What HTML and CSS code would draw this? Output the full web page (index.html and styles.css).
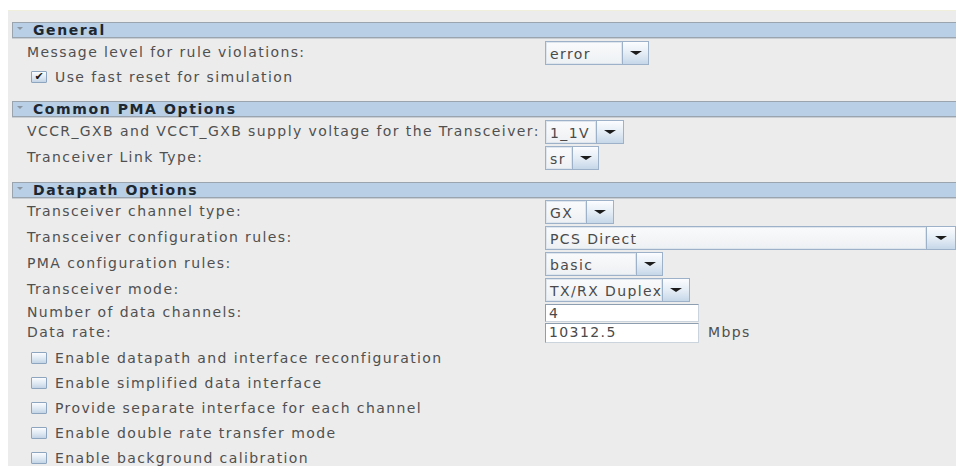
FILE: index.html
```html
<!DOCTYPE html>
<html lang="en">
<head>
<meta charset="utf-8">
<title>Transceiver Parameters</title>
<link rel="stylesheet" href="styles.css">
</head>
<body>
<div class="panel">

  <section class="group">
    <div class="group-head"><span class="twisty"></span>General</div>
    <div class="group-body body-general">
      <div class="row first">
        <span class="label">Message level for rule violations:</span>
        <span class="combo w-error"><span class="combo-value">error</span><span class="combo-btn"></span></span>
      </div>
      <div class="check-row tight">
        <span class="box checked">&#10004;</span><span>Use fast reset for simulation</span>
      </div>
    </div>
  </section>

  <section class="group">
    <div class="group-head"><span class="twisty"></span>Common PMA Options</div>
    <div class="group-body">
      <div class="row first">
        <span class="label">VCCR_GXB and VCCT_GXB supply voltage for the Transceiver:</span>
        <span class="combo w-volt"><span class="combo-value">1_1V</span><span class="combo-btn"></span></span>
      </div>
      <div class="row">
        <span class="label">Tranceiver Link Type:</span>
        <span class="combo w-sr"><span class="combo-value">sr</span><span class="combo-btn"></span></span>
      </div>
    </div>
  </section>

  <section class="group">
    <div class="group-head"><span class="twisty"></span>Datapath Options</div>
    <div class="group-body">
      <div class="row">
        <span class="label">Transceiver channel type:</span>
        <span class="combo w-gx"><span class="combo-value">GX</span><span class="combo-btn"></span></span>
      </div>
      <div class="row">
        <span class="label">Transceiver configuration rules:</span>
        <span class="combo w-fill"><span class="combo-value">PCS Direct</span><span class="combo-btn wide"></span></span>
      </div>
      <div class="row">
        <span class="label">PMA configuration rules:</span>
        <span class="combo w-basic"><span class="combo-value">basic</span><span class="combo-btn"></span></span>
      </div>
      <div class="row">
        <span class="label">Transceiver mode:</span>
        <span class="combo w-mode"><span class="combo-value">TX/RX Duplex</span><span class="combo-btn"></span></span>
      </div>
      <div class="row field-row">
        <span class="label">Number of data channels:</span>
        <span class="field">4</span>
      </div>
      <div class="row field-row rate">
        <span class="label">Data rate:</span>
        <span class="field">10312.5</span>
        <span class="unit">Mbps</span>
      </div>
      <div class="checks">
        <div class="check-row"><span class="box"></span><span>Enable datapath and interface reconfiguration</span></div>
        <div class="check-row"><span class="box"></span><span>Enable simplified data interface</span></div>
        <div class="check-row"><span class="box"></span><span>Provide separate interface for each channel</span></div>
        <div class="check-row"><span class="box"></span><span>Enable double rate transfer mode</span></div>
        <div class="check-row"><span class="box"></span><span>Enable background calibration</span></div>
      </div>
    </div>
  </section>

</div>
</body>
</html>
```
FILE: styles.css
```css
* {
  box-sizing: border-box;
}

html,
body {
  margin: 0;
  background: #ffffff;
}

body {
  font-family: "DejaVu Sans", "Liberation Sans", sans-serif;
  font-size: 14px;
  letter-spacing: 1.4px;
  color: #505050;
  overflow: hidden;
}

/* property sheet surface */
.panel {
  margin: 10px 0 0 8px;
  height: 456px;
  background: #ececec;
  border-top: 1px solid #efefdc;
  padding: 11px 0 0 4px;
  overflow: hidden;
}

/* collapsible section title bar */
.group-head {
  display: flex;
  align-items: center;
  height: 16px;
  background: #b8cfe5;
  border: 1px solid #9aa4ae;
  border-right: none;
  box-shadow: 0 1px 0 #c9ced4;
  font-weight: bold;
  font-size: 14px;
  line-height: 14px;
  letter-spacing: 1.6px;
  color: #1d2731;
}

.twisty {
  flex: none;
  width: 20px;
  height: 14px;
  position: relative;
}

.twisty::before {
  content: "";
  position: absolute;
  left: 4px;
  top: 4px;
  border-left: 3px solid transparent;
  border-right: 3px solid transparent;
  border-top: 3px solid #8a95a1;
}

.group-body {
  padding: 0 0 12px 15px;
}

.row {
  display: flex;
  align-items: center;
  height: 24px;
  margin-top: 2px;
}

.row.first {
  margin-top: 3px;
}

.label {
  flex: none;
  width: 518px;
  padding-bottom: 3px;
  white-space: nowrap;
}

/* combo boxes */
.combo {
  display: flex;
  height: 24px;
  border: 1px solid #9db2c8;
  background: #f3f5f7;
}

.combo-value {
  flex: 1;
  min-width: 0;
  overflow: hidden;
  white-space: nowrap;
  padding: 3px 0 0 3px;
  border: 1px solid #dfe5ec;
  background: linear-gradient(#f9fafb, #eef1f4);
  color: #4a4a4a;
}

.combo-btn {
  flex: none;
  width: 26px;
  display: flex;
  align-items: center;
  justify-content: center;
  border-left: 1px solid #9db2c8;
  background: linear-gradient(#fbfdff, #e2ebf4 55%, #c6d7e9);
}

.combo-btn.wide {
  width: 29px;
}

.combo-btn::after {
  content: "";
  border-left: 6px solid transparent;
  border-right: 6px solid transparent;
  border-top: 4px solid #1c1c1c;
}

.w-error { width: 104px; }
.w-volt { width: 79px; }
.w-sr { width: 54px; }
.w-gx { width: 69px; }
.w-fill { flex: 1; }
.w-basic { width: 118px; }
.w-mode { width: 145px; }

.w-volt .combo-btn,
.w-gx .combo-btn,
.w-mode .combo-btn {
  width: 27px;
}

/* text fields */
.field-row {
  height: 18px;
}

.field-row.rate {
  height: 20px;
  margin-top: 1px;
}

.field {
  width: 154px;
  height: 100%;
  padding: 1px 0 0 3px;
  background: #ffffff;
  border: 1px solid #cbd3dc;
  border-top-color: #8e9eb1;
  border-left-color: #8e9eb1;
  line-height: 15px;
  color: #4a4a4a;
}

.unit {
  margin-left: 9px;
  padding-bottom: 2px;
}

/* check boxes */
.checks {
  margin-top: 2px;
}

.check-row {
  display: flex;
  align-items: center;
  height: 25px;
}

.check-row.tight {
  height: 24px;
}

.box {
  flex: none;
  width: 16px;
  height: 12px;
  margin: 0 8px 0 4px;
  border: 1px solid #8ea5bf;
  border-radius: 1px;
  background: linear-gradient(#fbfcfe, #dbe6f1 60%, #c3d4e6);
  font-size: 11px;
  line-height: 10px;
  letter-spacing: 0;
  text-align: center;
  color: #1a1a1a;
}
```
